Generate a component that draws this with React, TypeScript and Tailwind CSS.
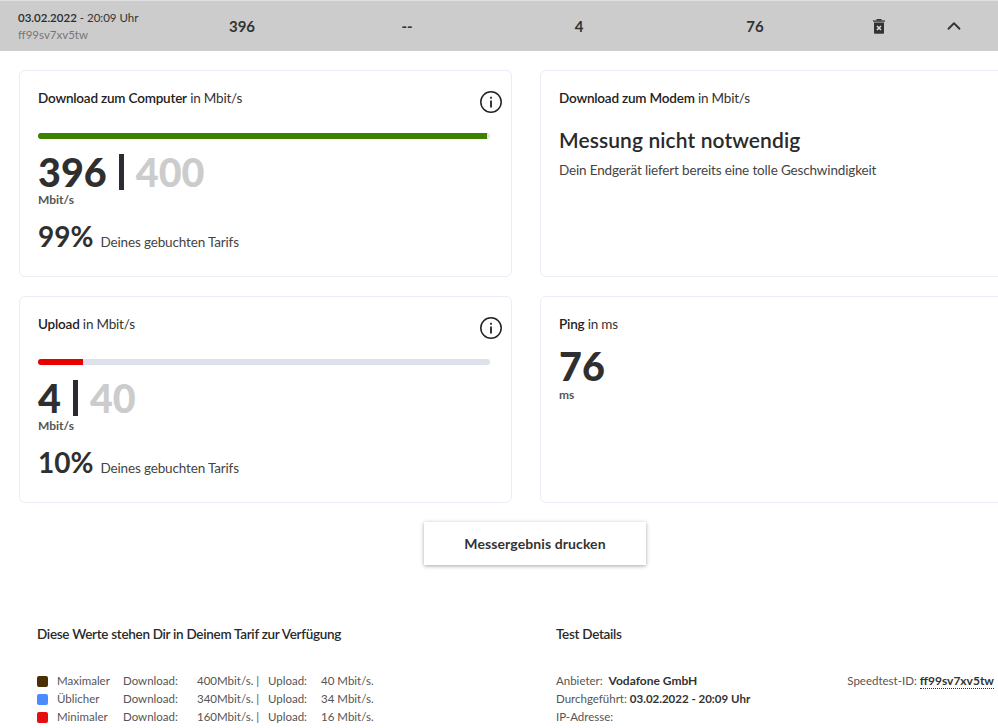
import { ChevronUp } from "lucide-react";

const tariff = [
  { name: "Maximaler", color: "bg-[#4a2f05]", down: "400Mbit/s.", up: "40 Mbit/s." },
  { name: "Üblicher", color: "bg-[#4a8cff]", down: "340Mbit/s.", up: "34 Mbit/s." },
  { name: "Minimaler", color: "bg-[#e60f0f]", down: "160Mbit/s.", up: "16 Mbit/s." },
];

function InfoIcon() {
  return (
    <svg width="24" height="24" viewBox="0 0 24 24" fill="none" className="absolute right-[8px] top-[19px]">
      <circle cx="12" cy="12" r="10.2" stroke="#222" strokeWidth="1.5" />
      <rect x="11.1" y="10.5" width="1.8" height="7" fill="#222" />
      <rect x="11.1" y="6.8" width="1.8" height="1.9" fill="#222" />
    </svg>
  );
}

function TrashIcon() {
  return (
    <svg width="12" height="15" viewBox="0 0 12 15">
      <rect x="0" y="1.4" width="12" height="1.3" fill="#333" />
      <rect x="3.5" y="0" width="5" height="1.6" fill="#333" />
      <path d="M1 3.6h10v10.2a1 1 0 0 1-1 1H2a1 1 0 0 1-1-1z" fill="#333" />
      <path d="M4 7l4 4M8 7l-4 4" stroke="#ddd" strokeWidth="1.5" />
    </svg>
  );
}

function Title({ bold, unit }: { bold: string; unit: string }) {
  return (
    <p className="text-[13.5px] leading-[18px] tracking-[-0.2px] text-[#333]">
      <span className="font-semibold text-[#222]">{bold}</span> {unit}
    </p>
  );
}

function ResultCard({
  title,
  value,
  total,
  percent,
  fill,
  barColor,
}: {
  title: string;
  value: string;
  total: string;
  percent: string;
  fill: string;
  barColor: string;
}) {
  return (
    <div className="relative h-[207px] rounded-md border border-[#e9edf5] bg-white pl-[18px] pr-[20px] pt-[18px]">
      <Title bold={title} unit="in Mbit/s" />
      <InfoIcon />
      <div className="mt-[26px] h-[6px] w-[452px] rounded-full bg-[#dde1ec]">
        <div className={`h-[6px] rounded-l-full ${barColor} ${fill}`} />
      </div>
      <div className="mt-[12px] flex h-[42px] items-center text-[39.5px] font-black leading-[42px] text-[#2f2f2f]">
        <span>{value}</span>
        <span className="ml-[12px] mr-[12px] h-[36px] w-[5px] bg-[#2b2b33]" />
        <span className="text-[#cccccc]">{total}</span>
      </div>
      <p className="text-[12px] font-bold leading-[14px] text-[#555]">Mbit/s</p>
      <div className="mt-[9px] flex items-baseline">
        <span className="text-[28px] font-bold leading-[40px] text-[#2f2f2f]">{percent}</span>
        <span className="ml-[7px] text-[13.5px] tracking-[-0.15px] text-[#444]">Deines gebuchten Tarifs</span>
      </div>
    </div>
  );
}

export default function App() {
  return (
    <div className="h-[728px] w-[998px] overflow-hidden bg-white font-['Lato',sans-serif] text-[#333]">
      <div className="flex h-[51px] items-center border-t border-[#e0e0e0] bg-[#cccccc] pl-[18px] text-[#333]">
        <div className="w-[174px] text-[11.5px] leading-[17px]">
          <p>
            <span className="font-semibold text-[#2a2a2a]">03.02.2022</span> - 20:09 Uhr
          </p>
          <p className="text-[#777]">ff99sv7xv5tw</p>
        </div>
        <div className="w-[100px] text-center text-[15px] font-bold">396</div>
        <div className="ml-[65px] w-[100px] text-center text-[15px] font-bold">--</div>
        <div className="ml-[72px] w-[100px] text-center text-[15px] font-bold">4</div>
        <div className="ml-[76px] w-[100px] text-center text-[15px] font-bold">76</div>
        <div className="ml-[54px] flex w-[40px] justify-center">
          <TrashIcon />
        </div>
        <div className="ml-[35px] flex w-[40px] justify-center">
          <ChevronUp size={22} strokeWidth={2} className="text-[#333]" />
        </div>
      </div>

      <div className="grid w-[1100px] grid-cols-[493px_493px] gap-x-[28px] gap-y-[19px] pl-[19px] pt-[19px]">
        <ResultCard title="Download zum Computer" value="396" total="400" percent="99%" fill="w-[449px]" barColor="bg-[#3d8000]" />
        <div className="h-[207px] rounded-md border border-[#e9edf5] bg-white pl-[18px] pt-[18px]">
          <Title bold="Download zum Modem" unit="in Mbit/s" />
          <h2 className="mt-[20px] text-[21px] font-semibold leading-[26px] tracking-[0.1px] text-[#2a2a2a]">Messung nicht notwendig</h2>
          <p className="mt-[8px] text-[13.5px] leading-[18px] tracking-[-0.15px] text-[#444]">Dein Endgerät liefert bereits eine tolle Geschwindigkeit</p>
        </div>
        <ResultCard title="Upload" value="4" total="40" percent="10%" fill="w-[45px]" barColor="bg-[#e60000]" />
        <div className="h-[207px] rounded-md border border-[#e9edf5] bg-white pl-[18px] pt-[18px]">
          <p className="text-[13.5px] leading-[18px] tracking-[-0.2px] text-[#333]">
            <span className="font-semibold text-[#222]">Ping</span> in ms
          </p>
          <p className="mt-[12px] text-[39.5px] font-black leading-[42px] text-[#2f2f2f]">76</p>
          <p className="mt-[1px] text-[12px] font-bold leading-[14px] text-[#555]">ms</p>
        </div>
      </div>

      <div className="mt-[19px] flex justify-center pl-[72px]">
        <button className="h-[43px] w-[222px] bg-white text-[14px] font-bold tracking-[0.1px] text-[#333] shadow-[0_1px_4px_rgba(0,0,0,0.35)]">
          Messergebnis drucken
        </button>
      </div>

      <div className="mt-[60px] flex pl-[37px]">
        <div className="w-[519px]">
          <h3 className="text-[13.5px] font-semibold leading-[18px] tracking-[-0.3px] text-[#2a2a2a]">Diese Werte stehen Dir in Deinem Tarif zur Verfügung</h3>
          <div className="mt-[29px] text-[11.5px] leading-[18px] text-[#555]">
            {tariff.map((row) => (
              <div key={row.name} className="flex items-center">
                <span className={`h-[11px] w-[11px] rounded-[2px] ${row.color}`} />
                <span className="ml-[9px] w-[66px]">{row.name}</span>
                <span className="w-[74px]">Download:</span>
                <span className="w-[71px]">{row.down} |</span>
                <span className="w-[53px]">Upload:</span>
                <span>{row.up}</span>
              </div>
            ))}
          </div>
        </div>
        <div className="w-[438px]">
          <h3 className="text-[13.5px] font-semibold leading-[18px] tracking-[-0.3px] text-[#2a2a2a]">Test Details</h3>
          <div className="mt-[29px] flex justify-between text-[11.5px] leading-[18px] text-[#555]">
            <div>
              <p>
                Anbieter: <span className="ml-[3px] text-[12px] font-bold text-[#333]">Vodafone GmbH</span>
              </p>
              <p>
                Durchgeführt: <span className="font-bold text-[#333]">03.02.2022 - 20:09 Uhr</span>
              </p>
              <p>IP-Adresse:</p>
            </div>
            <p>
              Speedtest-ID:{" "}
              <span className="border-b border-dotted border-[#333] text-[12px] font-bold text-[#333]">ff99sv7xv5tw</span>
            </p>
          </div>
        </div>
      </div>
    </div>
  );
}
